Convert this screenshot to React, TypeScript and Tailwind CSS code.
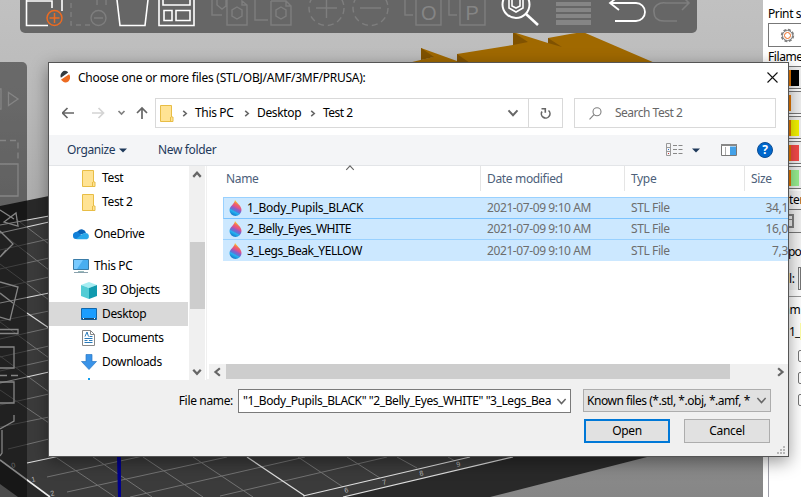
import React from "react";

const FONT = "font-['Noto_Sans','Open_Sans',sans-serif] text-[12px] tracking-[-0.34px] leading-none whitespace-nowrap";

type Seg = [number, number, number, number];

const brightLines: Seg[] = [
  [0, 225, 49, 216], [0, 233, 49, 222], [0, 303, 49, 293], [0, 383, 49, 372], [27, 313, 49, 328],
  [27, 463, 60, 456], [247, 457, 305, 496], [303, 496, 470, 457], [343, 497, 513, 457],
];
const dimLines: Seg[] = [
  [0, 250, 49, 239], [0, 269, 49, 258], [0, 288, 49, 277], [0, 321, 49, 311], [0, 339, 49, 328], [0, 357, 49, 346],
  [0, 371, 49, 360], [0, 405, 49, 394], [0, 427, 49, 417], [8, 449, 49, 439],
  [16, 219, 49, 244], [0, 232, 49, 270], [0, 264, 49, 300], [0, 294, 27, 313], [0, 322, 49, 358],
  [0, 356, 49, 392], [0, 390, 49, 423], [57, 458, 115, 497], [93, 457, 152, 497], [143, 457, 203, 497],
  [193, 457, 253, 497], [298, 457, 343, 487], [347, 457, 380, 478], [397, 457, 417, 468], [448, 457, 455, 461],
  [47, 477, 143, 456], [67, 492, 227, 457], [130, 497, 305, 457], [220, 496, 387, 457],
];

function Scene() {
  return (
    <svg className="absolute left-0 top-0" width="763" height="497">
      <defs>
        <linearGradient id="sky" x1="0" y1="0" x2="0" y2="1">
          <stop offset="0" stopColor="#c1c1c1" />
          <stop offset="0.2" stopColor="#bababa" />
          <stop offset="1" stopColor="#868686" />
        </linearGradient>
      </defs>
      <rect width="763" height="497" fill="url(#sky)" />
      <path d="M0 206 49 196 700 300 647 457 490 497H18L0 484z" fill="#292929" />
      <path d="M0 225 49 216 560 300 513 457 343 497H50L0 460z" fill="#3b3b3b" />
      <g stroke="#737373" strokeWidth="1">
        {dimLines.map((l, i) => <line key={i} x1={l[0]} y1={l[1]} x2={l[2]} y2={l[3]} />)}
      </g>
      <g stroke="#dedede" strokeWidth="1.2">
        {brightLines.map((l, i) => <line key={i} x1={l[0]} y1={l[1]} x2={l[2]} y2={l[3]} />)}
      </g>
      <path d="M0 460 50 497" stroke="#eee" strokeWidth="1.6" />
      <g fill="#bbb" fontSize="7" fontFamily="Liberation Sans">
        <text transform="translate(345 493) rotate(-14)">6</text>
        <text transform="translate(383 485) rotate(-14)">7</text>
        <text transform="translate(420 476) rotate(-14)">8</text>
        <text transform="translate(457 467) rotate(-14)">9</text>
        <text transform="translate(12 468) rotate(-14)">0</text>
        <text transform="translate(32 482) rotate(-14)">1</text>
        <text transform="translate(51 496) rotate(-14)">2</text>
      </g>
      <path d="M117 457h4v40h-3z" fill="#00008b" />
      <path d="M408 63 433 57 421 53V48L457 61V54L513 45V32L548 43V38L570 34 583 32 655 63z" fill="#a06900" />
      <path d="M421 48 434 57 421 60zM513 32 528 42 513 45zM457 54 470 63H457zM548 38 562 47 548 43z" fill="#805200" />
    </svg>
  );
}

function TopToolbar() {
  return (
    <div className="absolute left-[20px] top-0 h-[33px] w-[677px] overflow-hidden rounded-b-[5px] bg-[#666]">
      <svg width="677" height="33" viewBox="20 0 677 33" fill="none">
        <g stroke="#7e7e7e" strokeWidth="1.4">
          <path d="M90 25H71V0M106 0v8" strokeDasharray="5 4" />
          <path d="M97 0v8" strokeDasharray="5 4" />
          <circle cx="98.500" cy="18" r="7.500" />
          <path d="M94 18h9" />
          <path d="M212 0V15H222M217 0v5l5 4 4-3V0M227 0V25H247V5L242 1V5H247M237 7l5 3v6l-5 3-5-3v-6z" />
          <path d="M255 0V20H268M271 1V25H291V6L286 1H271M286 1V6H291M281 7l5 3v6l-5 3-5-3v-6z" />
          <circle cx="326.500" cy="8" r="17.500" strokeDasharray="6 4" />
          <circle cx="370.500" cy="8" r="17.500" strokeDasharray="6 4" />
          <path d="M316 8h21M326.500 0v18M360 8h21" />
          <path d="M405 0V15H413M416 0V25H441V0M449 0V15H457M460 0V25H485V0" />
          <path d="M689 3H666a10 8 0 0 0-12 9q0 9 10 9H677M682-4l7 7-7 7" strokeWidth="1.600" />
        </g>
        <g fill="#858585" fontSize="20" fontFamily="Liberation Sans">
          <text x="421" y="20">O</text>
          <text x="465.500" y="20">P</text>
        </g>
        <g fill="#858585"><path d="M556 2h35v4h-35zM556 8h35v4h-35zM556 14h35v4h-35zM556 20h35v5h-35z" /></g>
        <g stroke="#fff" strokeWidth="1.6">
          <path d="M26.500 0V25.500H48M26 1H52V8M62 0V11" />
          <path d="M117 0 120 25.500H145L148 0" />
          <path d="M159 0V25.500H194V0M163 0V5H190V0M164 10.500h8v10h-8zM176 10.500h14v10h-14z" />
          <circle cx="516" cy="4.500" r="13.500" strokeWidth="2" />
          <path d="M509 0v8l7 4 7-4V0M512 0v6l4 2 4-2V0" />
          <path d="M526 14 538 25" strokeWidth="2.600" />
          <path d="M610 3H636a9 9 0 0 1 0 18H615M619-4l-9 7 9 7" strokeWidth="1.800" />
        </g>
        <g stroke="#ed6b21" strokeWidth="1.500">
          <circle cx="54.500" cy="18" r="7.500" fill="#666" />
          <path d="M54.500 13v10M49.500 18h10" />
        </g>
      </svg>
    </div>
  );
}

function LeftToolbar() {
  return (
    <div className="absolute left-0 top-[62px] h-[435px] w-[27px] rounded-tr-[5px] bg-black/[0.44]">
      <svg width="27" height="435" viewBox="0 62 27 435" fill="none" stroke="#858585" strokeWidth="1.300">
        <path d="M8.500 92.500V105.500L18 99zM0 89h1v20H0" />
        <path d="M0 140.500H18V160" strokeDasharray="6 4" />
        <path d="M0 164H18V196H0" />
        <path d="M0 210 14 219M4 222 16 213 18 226zM0 231 13 244 0 257M0 257 6 250" />
        <path d="M0 282 18 287 10 320 0 317M0 293 13 303M0 329.500H18V333.500H0M0 347H14V368H0" />
        <path d="M0 375.500H18" strokeDasharray="7 4" />
        <path d="M0 382H14V403H0M14 415V421L0 429M2 430V453L0 456" />
      </svg>
    </div>
  );
}

const swatches = ["bg-black", "bg-[#f0f0f0]", "bg-[#f5f500]", "bg-[#f54a4a]", "bg-[#98ee90]"];

function SidePanel() {
  return (
    <div className={`absolute left-[763px] top-0 flex h-[497px] w-[38px] flex-col overflow-hidden bg-white text-black ${FONT}`}>
      <div className="flex h-[23px] items-center pl-[5px] pt-[5px] tracking-[-0.4px]">Print s</div>
      <div className="ml-[5px] flex h-[24px] w-[60px] shrink-0 items-center border border-[#777] pl-[11px]">
        <svg width="15" height="15" viewBox="0 0 15 15" fill="none">
          <circle cx="7.500" cy="7.500" r="5.800" stroke="#808080" strokeWidth="1.800" strokeDasharray="3 1.500" />
          <circle cx="7.500" cy="7.500" r="5" stroke="#808080" />
          <circle cx="7.500" cy="7.500" r="3" stroke="#ed6b21" />
        </svg>
      </div>
      <div className="flex h-[19px] shrink-0 items-center pl-[5px] tracking-[-0.4px]">Filame</div>
      {swatches.map((s) => (
        <div key={s} className="mb-[2px] ml-[5px] flex h-[23px] w-[60px] shrink-0 items-center border border-[#777] bg-[#f0f0f0] pl-[20px]">
          <div className="h-4 w-[2px] bg-[#e67700]" />
          <div className={`h-4 w-[8px] ${s}`} />
        </div>
      ))}
      <div className="flex h-[18px] shrink-0 items-center bg-[#f4f4f4] pl-[26px]">ter</div>
      <div className="flex h-[24px] shrink-0 items-center border-y border-[#777] bg-[#f0f0f0] pl-[16px]">
        <div className="h-[14px] w-[15px] border-2 border-[#808080]"><div className="mt-[3px] h-px bg-[#808080]" /></div>
      </div>
      <div className="flex h-[34px] shrink-0 items-center bg-[#f4f4f4] pl-[25px] pt-[4px] tracking-[-0.8px]">po</div>
      <div className="flex h-[23px] shrink-0 items-center bg-[#f4f4f4] pl-[26px]">l:<div className="ml-[3px] h-[23px] w-5 border border-[#777]" /></div>
      <div className="mt-[6px] flex h-[27px] shrink-0 items-center border-t border-[#999] pl-[20px]">am</div>
      <div className="flex h-[17px] shrink-0 items-center pl-[26px] tracking-[-0.8px]">1_<span className="h-full w-4 bg-[#ffffa8]" /></div>
      <div className="flex flex-col gap-[10px] pl-[35px] pt-[10px]">
        {[0, 1, 2].map((n) => <div key={n} className="h-[12px] w-[12px] rounded-[2px] border border-[#777]" />)}
      </div>
      <div className="ml-[5px] mt-[12px] w-px flex-1 bg-[#a0a0aa]" />
    </div>
  );
}

function Folder() {
  return (
    <svg width="14" height="17" viewBox="0 0 14 17">
      <path d="M.5.5h11v11.500h1.500v4.500H.5z" fill="#ffe394" stroke="#e8bd45" />
      <path d="M10.500 12v4.500" stroke="#e8bd45" />
    </svg>
  );
}

function Chevron({ dir = "right", color = "#666", size = 8, w = 1.5 }: { dir?: "right" | "left" | "down" | "up"; color?: string; size?: number; w?: number }) {
  const d = {
    right: "M2.500 1 6 4 2.500 7",
    left: "M5.500 1 2 4 5.500 7",
    down: "M1 2.200 4 5.500 7 2.200",
    up: "M1 5.500 4 2.200 7 5.500",
  }[dir];
  return <svg width={size} height={size} viewBox="0 0 8 8" fill="none" stroke={color} strokeWidth={w}><path d={d} /></svg>;
}

function NavRow() {
  return (
    <div className="flex h-[30px] items-center">
      <div className="flex w-[106px] items-center pl-[13px]">
        <svg width="90" height="16" viewBox="62 105 90 16" fill="none" strokeWidth="1.700">
          <path d="M74 113H62.500M67.500 108l-5 5 5 5" stroke="#666" />
          <path d="M92 113h11.500M98.500 108l5 5-5 5" stroke="#d4d4d4" />
          <path d="M118.500 111l3 3 3-3" stroke="#808080" />
          <path d="M142 119v-11M137 113l5-5 5 5" stroke="#666" />
        </svg>
      </div>
      <div className="flex h-[30px] w-[408px] items-center border border-[#d9d9d9] pl-1">
        <Folder />
        <div className="flex w-[21px] items-center justify-center"><Chevron size={7} w={1.8} /></div>
        <span className="w-[42px]">This PC</span>
        <div className="flex w-[19px] items-center justify-center"><Chevron size={7} w={1.8} /></div>
        <span className="ml-[1px] w-[45px]">Desktop</span>
        <div className="flex w-[20px] items-center justify-center"><Chevron size={7} w={1.8} /></div>
        <span className="ml-[1px] tracking-[-0.5px]">Test 2</span>
        <div className="ml-auto mr-[9px]"><Chevron dir="down" size={12} w={1.3} /></div>
        <div className="flex h-full w-[34px] items-center justify-center border-l border-[#d9d9d9]">
          <svg width="12" height="13" viewBox="0 0 12 13" fill="none" stroke="#666" strokeWidth="1.600">
            <path d="M2 4.500A4.300 4.300 0 1 0 8.500 3.500M1.500 1.800H5.300V5.800" />
          </svg>
        </div>
      </div>
      <div className="ml-[11px] flex h-[30px] w-[202px] items-center border border-[#d9d9d9] pl-[14px] text-[#666]">
        <svg width="13" height="13" viewBox="0 0 13 13" fill="none" stroke="#808080" strokeWidth="1.100">
          <circle cx="8" cy="4.800" r="4" /><path d="M5 7.700.5 12.300" />
        </svg>
        <span className="ml-[13px] tracking-[-0.5px]">Search Test 2</span>
      </div>
    </div>
  );
}

function CommandBar() {
  return (
    <div className="mt-[7px] flex h-[31px] items-center border-b border-[#e3e5e8] bg-[#f4f5f7] pl-[18px] text-[#1e395b]">
      <span className="w-[52px] tracking-[-0.4px]">Organize</span>
      <svg width="8" height="5"><path d="M0 .5h8L4 4.500z" fill="#1e395b" /></svg>
      <span className="ml-[31px] tracking-[-0.35px]">New folder</span>
      <svg className="ml-auto" width="17" height="14" fill="none">
        <path d="M.5.500h4v12h-4zM.5 4.500h4M.5 8.500h4" stroke="#999" />
        <path d="M7 2.500h4M12.500 2.500h4M7 6.500h4M12.500 6.500h4M7 10.500h4M12.500 10.500h4" stroke="#888" />
        <path d="M2 6h1v1H2z" fill="#37c" /><path d="M2 10h1v1H2z" fill="#c33" />
      </svg>
      <svg className="ml-[9px]" width="8" height="5"><path d="M0 .5h8L4 4.500z" fill="#1e395b" /></svg>
      <svg className="ml-[21px]" width="17" height="13">
        <path d="M.5.500h15v11H.5z" fill="#fff" stroke="#777" />
        <path d="M0 0h16v2H0z" fill="#888" /><path d="M9 2.500h6v8.500H9z" fill="#43a1e8" /><path d="M4.500 3v8" stroke="#aaa" />
      </svg>
      <div className="ml-[19px] mr-[15px] flex h-4 w-4 items-center justify-center rounded-full border border-[#0c4d94] bg-[#0067cc] text-[12px] font-bold text-white">?</div>
    </div>
  );
}

function OneDrive() {
  return (
    <svg width="17" height="12">
      <path d="M3 8a4 4 0 0 1 2-5 4.500 4.500 0 0 1 8 2z" fill="#0864b8" />
      <path d="M0 8a3.500 3.500 0 0 1 6-3l6 6H3a3 3 0 0 1-3-3z" fill="#1180d8" />
      <path d="M3 11l7-5.500 3-.5a3.300 3.300 0 0 1 1 6.300H4z" fill="#28a8ea" />
    </svg>
  );
}
function Monitor() {
  return (
    <svg width="17" height="15">
      <path d="M.5.500h15v10H.5z" fill="#49aef0" stroke="#3a7ca8" /><path d="M1 1h9L4 10H1z" fill="#78caff" />
      <path d="M5 12h6v1H5z" fill="#9bb" /><path d="M1 13.500h14" stroke="#8aa1ad" />
    </svg>
  );
}
function Cube() {
  return (
    <svg width="16" height="17">
      <path d="M0 3 8 0l8 3-8 3z" fill="#a6edf2" /><path d="M0 3l8 3v11l-8-3z" fill="#52ccd5" /><path d="M16 3 8 6v11l8-3z" fill="#109aae" />
    </svg>
  );
}
function DesktopIcon() {
  return (
    <svg width="16" height="12">
      <path d="M.5.500h15v11H.5z" fill="#1a9dff" stroke="#1267aa" /><path d="M1 10h14v1.500H1z" fill="#174b75" /><path d="M2 10.500h1M13 10.500h1" stroke="#fff" />
    </svg>
  );
}
function DocIcon() {
  return (
    <svg width="13" height="16" fill="none">
      <path d="M.5.500h8l4 4v11H.5z" fill="#fff" stroke="#888" /><path d="M8.500.5v4h4" stroke="#888" />
      <path d="M3 6.500 5 2l1.500 4.500M7.500 6.500h3M2.500 8.500h8M2.500 10.500h3M7 10.500h3.500M2.500 12.500h8" stroke="#2a7ab9" />
    </svg>
  );
}
function DownloadIcon() {
  return <svg width="16" height="16"><path d="M5 .5h6v7h4.500L8 15.500.5 7.500H5z" fill="#3993e8" stroke="#2c78c4" strokeWidth=".7" /></svg>;
}

const tree = [
  { label: "Test", icon: <Folder />, cls: "pl-[33px]", slot: "w-[20px]" },
  { label: "Test 2", icon: <Folder />, cls: "pl-[33px]", slot: "w-[20px]" },
  { label: "OneDrive", icon: <OneDrive />, cls: "pl-[24px] mt-2", slot: "w-[21px]" },
  { label: "This PC", icon: <Monitor />, cls: "pl-[24px] mt-2", slot: "w-[21px]" },
  { label: "3D Objects", icon: <Cube />, cls: "pl-[32px]", slot: "w-[21px]" },
  { label: "Desktop", icon: <DesktopIcon />, cls: "pl-[32px] bg-[#d9d9d9]", slot: "w-[21px]" },
  { label: "Documents", icon: <DocIcon />, cls: "pl-[33px]", slot: "w-[20px]" },
  { label: "Downloads", icon: <DownloadIcon />, cls: "pl-[32px]", slot: "w-[21px]" },
];

function Tree() {
  return (
    <div className="flex w-[157px]">
      <div className="mr-px w-[139px] overflow-hidden">
        {tree.map((t) => (
          <div key={t.label} className={`flex h-6 items-center ${t.cls}`}>
            <div className={t.slot}>{t.icon}</div>
            <span>{t.label}</span>
          </div>
        ))}
        <div className="ml-[39px] mt-[4px] h-[2px] w-[2px] bg-[#139ef0]" />
      </div>
      <div className="flex w-[16px] flex-col items-center bg-[#f0f0f0]">
        <div className="flex h-[18px] items-center"><Chevron dir="up" size={10} w={1.8} /></div>
        <div className="mt-[58px] h-[67px] w-[15px] bg-[#cdcdcd]" />
        <div className="mb-[3px] mt-auto"><Chevron dir="down" size={10} w={1.8} /></div>
      </div>
    </div>
  );
}

function Drop() {
  return (
    <svg width="13" height="16" viewBox="0 0 13 16">
      <defs>
        <linearGradient id="drop" x1=".75" y1="0" x2=".35" y2="1">
          <stop offset=".14" stopColor="#ffc020" /><stop offset=".28" stopColor="#f06a60" />
          <stop offset=".44" stopColor="#e0508c" /><stop offset=".56" stopColor="#8a5fc8" />
          <stop offset=".68" stopColor="#5a78d8" /><stop offset=".76" stopColor="#24b4f2" /><stop offset="1" stopColor="#1674c8" />
        </linearGradient>
      </defs>
      <path d="M6 0C8 3 12.500 6 12.500 10a6 6 0 0 1-12 0C.5 6.500 5.500 4 6 0z" fill="url(#drop)" />
    </svg>
  );
}

const files = [
  { name: "1_Body_Pupils_BLACK", size: "34,1", track: "tracking-[-0.3px]", cls: "h-[22px] border-t border-b border-l border-t-[#99d1ff] border-b-[#7dc4ff] border-l-[#99d1ff]" },
  { name: "2_Belly_Eyes_WHITE", size: "16,0", track: "tracking-[-0.47px]", cls: "h-[21px] border-b border-b-[#99d1ff] pl-px" },
  { name: "3_Legs_Beak_YELLOW", size: "7,3", track: "tracking-[-0.45px]", cls: "h-[21px] pl-px" },
];

function FilePane() {
  return (
    <div className="flex flex-1 flex-col border-l border-[#f0f0f0]">
      <div className="flex h-[25px] text-[#4c607a]">
        <div className="relative flex w-[274px] items-center border-r border-[#e5e5e5] pl-[19px]">
          Name
          <div className="absolute left-[138px] top-[-3px]"><Chevron dir="up" size={10} w={0.9} /></div>
        </div>
        <div className="flex w-[144px] items-center border-r border-[#e5e5e5] pl-[6px]">Date modified</div>
        <div className="flex w-[120px] items-center border-r border-[#e5e5e5] pl-[6px]">Type</div>
        <div className="flex items-center pl-[6px]">Size</div>
      </div>
      <div className="ml-[16px] mt-[6px]">
        {files.map((f) => (
          <div key={f.name} className={`flex items-center bg-[#cce8ff] ${f.cls}`}>
            <div className="w-[23px] pl-[5px]"><Drop /></div>
            <span className={`w-[240px] ${f.track}`}>{f.name}</span>
            <span className="w-[144px] tracking-[-0.4px] text-[#6d6d6d]">2021-07-09 9:10 AM</span>
            <span className="w-[100px] tracking-[-0.4px] text-[#6d6d6d]">STL File</span>
            <span className="ml-auto text-[#6d6d6d]">{f.size}</span>
          </div>
        ))}
      </div>
      <div className="ml-[2px] mt-auto flex h-[15px] items-center bg-[#f0f0f0]">
        <div className="flex w-[17px] justify-center"><Chevron dir="left" size={10} w={1.8} /></div>
        <div className="h-full w-[504px] bg-[#cdcdcd]" />
        <div className="ml-auto mr-[3px]"><Chevron size={10} w={1.8} /></div>
      </div>
      <div className="h-px bg-[#f0f0f0]" />
    </div>
  );
}

function Footer() {
  return (
    <div className="h-[76px] bg-[#f0f0f0]">
      <div className="flex pt-[9px]">
        <span className="flex h-6 w-[189px] items-center justify-end pr-[5px]">File name:</span>
        <div className="flex h-6 w-[333px] items-center border border-[#7a7a7a] bg-white pl-[4px]">
          <span className="w-[311px] leading-[20px] tracking-[-0.41px]">"1_Body_Pupils_BLACK" "2_Belly_Eyes_WHITE" "3_Legs_Bea</span>
          <div className="ml-[2px]"><Chevron dir="down" size={11} w={1.1} /></div>
        </div>
        <div className="ml-[12px] flex h-[23px] w-[188px] items-center border border-[#adadad] bg-[#e1e1e1] pl-[3px]">
          <span className="w-[167px] tracking-[-0.47px]">Known files (*.stl, *.obj, *.amf, *</span>
          <div className="ml-[2px]"><Chevron dir="down" size={11} w={1.1} /></div>
        </div>
      </div>
      <div className="flex items-start pl-[535px] pt-[6px]">
        <button className="flex h-[24px] w-[86px] items-center justify-center border-2 border-[#0078d7] bg-[#e1e1e1]">Open</button>
        <button className="ml-[14px] flex h-[24px] w-[86px] items-center justify-center border border-[#adadad] bg-[#e1e1e1]">Cancel</button>
        <svg className="ml-[7px] mt-[27px]" width="9" height="9" fill="#b8b8b8">
          <path d="M6 0h2v2H6zM3 3h2v2H3zM6 3h2v2H6zM0 6h2v2H0zM3 6h2v2H3zM6 6h2v2H6z" />
        </svg>
      </div>
    </div>
  );
}

function Dialog() {
  return (
    <div className={`absolute left-[48px] top-[62px] flex h-[395px] w-[741px] flex-col overflow-hidden border border-[#555] bg-white text-black shadow-[0_5px_16px_rgba(0,0,0,0.4)] ${FONT}`}>
      <div className="flex h-[35px] shrink-0 items-start pl-[11px] pt-[7px]">
        <svg width="10" height="13" viewBox="0 0 11 13">
          <path d="M1 8A5 5.500 0 0 1 8 1l1 1z" fill="#333b40" /><path d="M10 4A5 5.500 0 0 1 2 11L1 10z" fill="#ed6b21" />
        </svg>
        <span className="ml-[8px] mt-[2px] tracking-[-0.23px]">Choose one or more files (STL/OBJ/AMF/3MF/PRUSA):</span>
        <svg className="ml-auto mr-[10px] mt-[2px]" width="11" height="11"><path d="M.5.500l10 10M10.500.5l-10 10" stroke="#111" strokeWidth="1.100" /></svg>
      </div>
      <NavRow />
      <CommandBar />
      <div className="flex h-[214px]">
        <Tree />
        <FilePane />
      </div>
      <Footer />
    </div>
  );
}

export default function App() {
  return (
    <div className="relative h-[497px] w-[801px] overflow-hidden bg-white">
      <Scene />
      <TopToolbar />
      <LeftToolbar />
      <SidePanel />
      <Dialog />
    </div>
  );
}
